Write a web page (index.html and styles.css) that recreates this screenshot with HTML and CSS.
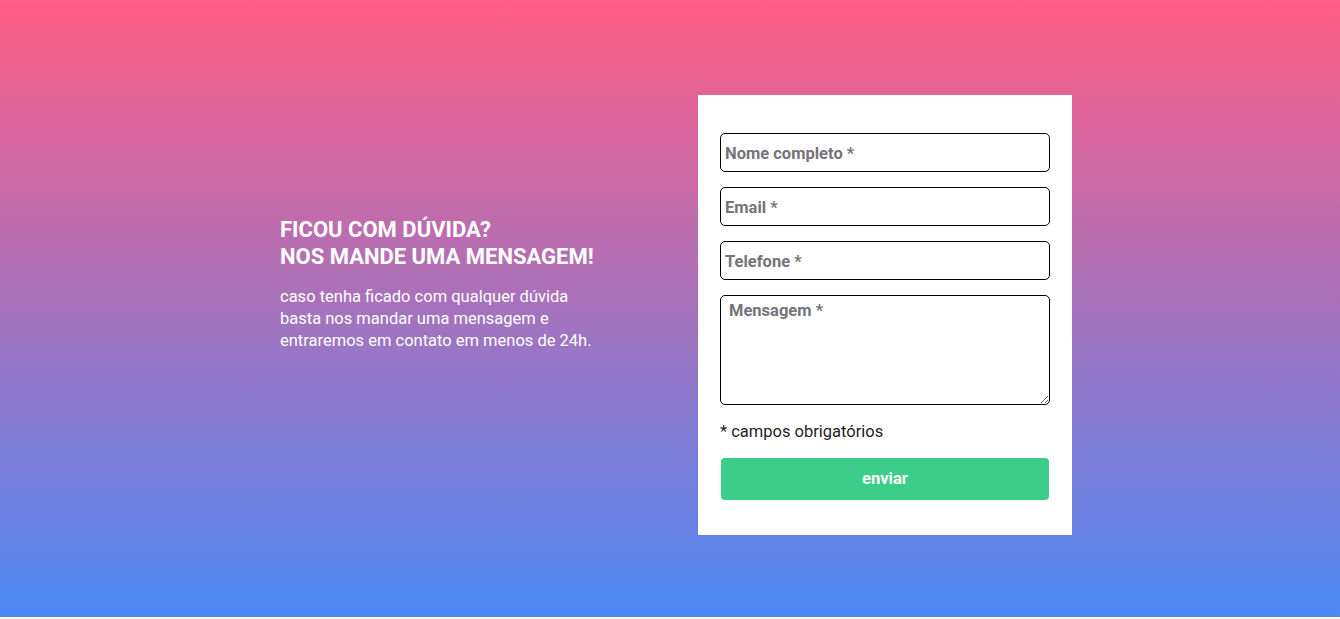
FILE: index.html
```html
<!DOCTYPE html>
<html lang="pt-BR">
<head>
<meta charset="utf-8">
<title>Contato</title>
<link rel="stylesheet" href="styles.css">
</head>
<body>
<section class="contact">
  <div class="intro">
    <h2 class="intro-title">FICOU COM DÚVIDA?<br>NOS MANDE UMA MENSAGEM!</h2>
    <p class="intro-text">caso tenha ficado com qualquer dúvida basta nos mandar uma mensagem e entraremos em contato em menos de 24h.</p>
  </div>
  <form class="card">
    <input class="field" type="text" placeholder="Nome completo *">
    <input class="field" type="email" placeholder="Email *">
    <input class="field" type="tel" placeholder="Telefone *">
    <textarea class="field area" placeholder="Mensagem *"></textarea>
    <p class="note">* campos obrigatórios</p>
    <button class="send" type="button">enviar</button>
  </form>
</section>
</body>
</html>
```

FILE: styles.css
```css
* { box-sizing: border-box; }
html, body { margin: 0; padding: 0; background: #fff; }
body { font-family: Roboto, "Liberation Sans", sans-serif; }

.contact {
  height: 617px;
  background: linear-gradient(to bottom, #ff5d84 0%, #4c88f4 100%);
  display: flex;
  align-items: flex-start;
  padding: 95px 0 0 280px;
  gap: 88px;
}

.intro {
  width: 330px;
  margin-top: 121px;
  color: #fff;
}
.intro-title {
  margin: 0;
  font-size: 22px;
  line-height: 27px;
  font-weight: 700;
  white-space: nowrap;
}
.intro-text {
  margin: 16px 0 0;
  font-size: 16.5px;
  line-height: 22px;
  width: 322px;
}

.card {
  width: 374px;
  height: 440px;
  background: #fff;
  padding: 38px 22px 0 22px;
  display: flex;
  flex-direction: column;
}
.field {
  display: block;
  width: 330px;
  height: 39px;
  margin: 0 0 15px;
  border: 1px solid #000;
  border-radius: 5px;
  padding: 1px 4px 0;
  font-family: Roboto, "Liberation Sans", sans-serif;
  font-size: 16.5px;
  font-weight: 700;
  color: #333;
  background: #fff;
}
.field::placeholder { color: #77737a; opacity: 1; }
.area {
  height: 110px;
  margin: 0;
  padding: 5px 8px;
  resize: vertical;
  line-height: 19px;
}
.note {
  margin: 16px 0 0;
  font-size: 16.5px;
  line-height: 22px;
  color: #1e1e1e;
}
.send {
  margin: 15px 0 0 1px;
  width: 328px;
  height: 42px;
  border: none;
  border-radius: 4px;
  background: #3ccd88;
  color: #fff;
  font-family: Roboto, "Liberation Sans", sans-serif;
  font-size: 16.5px;
  font-weight: 700;
  padding: 0 0 2px;
}
```
